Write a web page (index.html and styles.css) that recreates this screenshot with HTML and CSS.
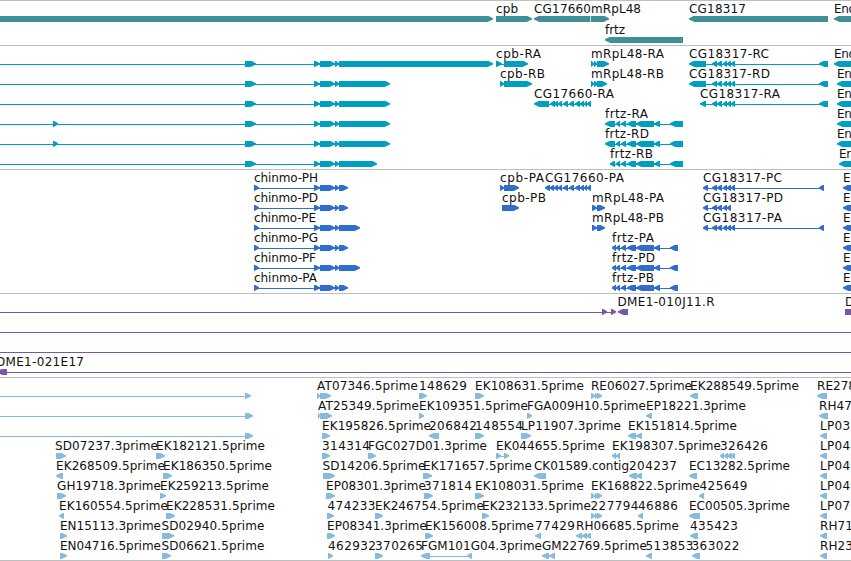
FILE: index.html
```html
<!DOCTYPE html>
<html lang="en">
<head>
    <meta charset="UTF-8">
    <title>Region view</title>
    <link rel="stylesheet" href="styles.css">
</head>
<body>
    <main class="tracks">
        <section class="track genes" data-track="genes"></section>
        <section class="track transcripts" data-track="transcripts"></section>
        <section class="track proteins" data-track="proteins"></section>
        <section class="track clones" data-track="clones"></section>
        <section class="track ests" data-track="ests"></section>
    </main>

    <script src="tracks.js"></script>
</body>
</html>
```
FILE: styles.css
```css
* {
    margin: 0;
    padding: 0;
    box-sizing: border-box;
}

body {
    background: #fff;
    overflow: hidden;
}

.tracks {
    display: flex;
    flex-direction: column;
    width: 851px;
    border-top: 1px solid #bebebe;
}

.track {
    border-bottom: 1px solid #bebebe;
}

.track svg {
    display: block;
    width: 100%;
}

.label {
    font-family: "DejaVu Sans", sans-serif;
    font-size: 12px;
    fill: #111;
}

.exon,
.intron {
    fill: currentColor;
}

.intron {
    shape-rendering: crispEdges;
}

.genes {
    color: #3f8f94;
}

.transcripts {
    color: #009fc0;
}

.proteins {
    color: #306ecd;
}

.clones {
    color: #7558a8;
}

.ests {
    color: #87bbdd;
}
```
FILE: tracks.js
```js
// feature: [label, label x, strand, exon start, exon end, exon start, exon end, ...]
const chinmo = [314, 320, 320, 335, 335, 339, 339];
const cg17660 = [554, 558, 558, 562, 563, 568, 569, 574, 575, 580, 580, 584, 584, 587, 587, 591];
const cg18317 = [712, 717, 717, 722, 723, 727, 727, 731];
const frtz = [616, 620, 621, 626, 627, 636, 636, 654, 654, 660];
const mrpl = [591, 595, 595, 598, 597, 602];

const tracks = {
    genes: {
        height: 44, first: 18, step: 21,
        rows: [
            [['', 0, 1, -5, 493], ['cpb', 496, 1, 496, 532], ['CG17660', 534, -1, 534, 590.3],
             ['mRpL48', 591, 1, 591, 609], ['CG18317', 689, -1, 689, 828], ['End', 834, -1, 834, 860]],
            [['frtz', 605, -1, 605, 683]]
        ]
    },
    transcripts: {
        height: 123, first: 18, step: 20,
        rows: [
            [['', 0, 1, -9, -5, 245, 256, ...chinmo, 493], ['cpb-RA', 496, 1, 496, 502, 504, 528],
             ['mRpL48-RA', 591, 1, 591, 594, 594, 597, 597, 609],
             ['CG18317-RC', 689, -1, 689, 706, ...cg18317, 731, 735, 819, 828], ['End', 834, -1, 834, 860]],
            [['', 0, 1, -9, -5, 245, 256, ...chinmo, 390], ['cpb-RB', 500, 1, 500, 504, 504, 532],
             ['mRpL48-RB', 591, 1, 591, 594, 594, 598, 597, 607],
             ['CG18317-RD', 689, -1, 689, 706, ...cg18317, 731, 735, 819, 828], ['End', 837, -1, 837, 860]],
            [['', 0, 1, -9, -5, 245, 256, ...chinmo, 390], ['CG17660-RA', 534, -1, 534, 549, 550, 555, ...cg17660],
             ['CG18317-RA', 700, -1, 700, 706, ...cg18317, 731, 735, 819, 828], ['End', 837, -1, 837, 860]],
            [['', 0, 1, -9, -5, 53, 58, 245, 256, ...chinmo, 390], ['frtz-RA', 605, -1, 605, 615, ...frtz, 670, 683],
             ['End', 837, -1, 837, 860]],
            [['', 0, 1, -9, -5, 53, 58, 245, 256, ...chinmo, 390], ['frtz-RD', 605, -1, 605, 615, ...frtz, 670, 683],
             ['End', 837, -1, 837, 860]],
            [['', 0, 1, -9, -5, 245, 256, ...chinmo, 377], ['frtz-RB', 610, -1, 610, 615, ...frtz, 670, 683],
             ['End', 839, -1, 839, 860]]
        ]
    },
    proteins: {
        height: 123, first: 18, step: 20,
        rows: [
            [['chinmo-PH', 254, 1, 254, 259, ...chinmo, 348], ['cpb-PA', 500, 1, 500, 504, 504, 519],
             ['CG17660-PA', 545, -1, 545, 550, 550, 554, ...cg17660],
             ['CG18317-PC', 703, -1, 703, 708, ...cg18317, 731, 735, 819, 824], ['E', 843, -1, 843, 860]],
            [['chinmo-PD', 254, 1, 254, 259, ...chinmo, 348], ['cpb-PB', 502, 1, 502, 519],
             ['mRpL48-PA', 592, 1, 592, 597, 597, 605],
             ['CG18317-PD', 703, -1, 703, 708, ...cg18317], ['E', 843, -1, 843, 860]],
            [['chinmo-PE', 254, 1, 254, 259, ...chinmo, 360], ['mRpL48-PB', 592, 1, 592, 597, 597, 605],
             ['CG18317-PA', 703, -1, 703, 708, ...cg18317, 731, 735, 819, 824], ['E', 843, -1, 843, 860]],
            [['chinmo-PG', 254, 1, 254, 259, ...chinmo, 348], ['frtz-PA', 612, -1, 612, 616, ...frtz, 670, 678],
             ['E', 843, -1, 843, 860]],
            [['chinmo-PF', 254, 1, 254, 259, ...chinmo, 360], ['frtz-PD', 612, -1, 612, 616, ...frtz, 670, 678],
             ['E', 843, -1, 843, 860]],
            [['chinmo-PA', 254, 1, 254, 259, ...chinmo, 348], ['frtz-PB', 612, -1, 612, 616, ...frtz, 670, 678],
             ['E', 843, -1, 843, 860]]
        ]
    },
    clones: {
        height: 83, first: 18, step: 20,
        rows: [
            [['', 0, 1, -9, -5, 602, 607, 611, 616], ['DME1-010J11.R', 617.5, -1, 618, 628], ['D', 845, 1, 845, 860]],
            [['', 0, 1, -9, -5, 860, 870]],
            [['', 0, 1, -9, -5, 860, 870]],
            [['DME1-021E17', -4, -1, -3, 7, 860, 870]]
        ]
    },
    ests: {
        height: 182, first: 18, step: 20,
        rows: [
            [['', 0, 1, -9, -5, 245, 251], ['AT07346.5prime', 317, 1, 317, 320, 320, 331], ['148629', 419, 1, 419, 427],
             ['EK108631.5prime', 475, 1, 475, 484], ['RE06027.5prime', 591, 1, ...mrpl],
             ['EK288549.5prime', 690, -1, 690, 698], ['RE278', 817, -1, 817, 827]],
            [['', 0, 1, -9, -5, 245, 253], ['AT25349.5prime', 318, 1, 318, 320, 320, 332],
             ['EK109351.5prime', 419, 1, 419, 424], ['FGA009H10.5prime', 527, 1, 527, 532],
             ['EP18221.3prime', 646, -1, 646, 652], ['RH47', 819, -1, 819, 828]],
            [['', 0, 1, -9, -5, 245, 253], ['EK195826.5prime', 322, 1, 322, 330], ['206842', 429, -1, 429, 439],
             ['148554', 475, 1, 475, 484], ['LP11907.3prime', 521, 1, 521, 531],
             ['EK151814.5prime', 628, -1, 628, 636, 636, 642], ['LP037', 820, -1, 820, 827]],
            [['SD07237.3prime', 55, 1, 56, 66], ['EK182121.5prime', 156, 1, 156, 165], ['314314', 322, 1, 322, 330],
             ['FGC027D01.3prime', 368, 1, 368, 376], ['EK044655.5prime', 496, 1, 496, 501, 504, 509],
             ['EK198307.5prime', 612, -1, 612, 616, 616, 620],
             ['326426', 720, -1, 720, 724, 724, 728, 727, 732, 731, 735], ['LP048', 820, -1, 820, 827]],
            [['EK268509.5prime', 56, -1, 56, 63], ['EK186350.5prime', 163, 1, 163, 172],
             ['SD14206.5prime', 322.5, 1, 323, 335], ['EK171657.5prime', 423, 1, 423, 432],
             ['CK01589.contig', 534, -1, 534, 546], ['204237', 629, -1, 629, 637, 636, 642],
             ['EC13282.5prime', 689, -1, 689, 697], ['LP049', 820, -1, 820, 827]],
            [['GH19718.3prime', 57, 1, 57, 66], ['EK259213.5prime', 160, 1, 160, 166],
             ['EP08301.3prime', 326, 1, 326, 335], ['371814', 424, 1, 424, 433], ['EK108031.5prime', 475, 1, 475, 484],
             ['EK168822.5prime', 591, 1, ...mrpl], ['425649', 699.5, -1, 699, 704], ['LP049', 820, -1, 820, 827]],
            [['EK160554.5prime', 59, -1, 59, 64], ['EK228531.5prime', 166, 1, 166, 175], ['474233', 327.5, 1, 327, 334],
             ['EK246754.5prime', 375, 1, 375, 383], ['EK232133.5prime', 482, 1, 482, 489],
             ['227794', 590.5, 1, ...mrpl], ['46886', 638, -1, 638, 643],
             ['EC00505.3prime', 689, -1, 689, 700], ['LP077', 820, -1, 820, 827]],
            [['EN15113.3prime', 60, 1, 60, 67], ['SD02940.5prime', 161.5, 1, 162, 174],
             ['EP08341.3prime', 327, 1, 327, 335], ['EK156008.5prime', 425, 1, 425, 433], ['77429', 535, -1, 535, 541],
             ['RH06685.5prime', 576, -1, 576, 582, 582, 587, 586, 591], ['435423', 690, -1, 690, 698],
             ['RH71', 820, -1, 820, 827]],
            [['EN04716.5prime', 60, 1, 60, 67], ['SD06621.5prime', 161.5, 1, 162, 171], ['462932', 328, 1, 328, 333],
             ['370265', 375, 1, 375, 383], ['FGM101G04.3prime', 421, -1, 421, 430, 467, 472],
             ['GM22769.5prime', 542, -1, 542, 549, 549, 555], ['513853', 645.5, -1, 646, 652],
             ['363022', 691.5, -1, 692, 700], ['RH23', 820, -1, 820, 827]]
        ]
    }
};

// pixel advances of the label font, everything else is 8
const advance = {
    '.': 4, '-': 7, E: 7, F: 7, P: 7, L: 7, T: 7, G: 9, D: 9, H: 9, M: 10, N: 8, J: 4,
    c: 6, h: 7, i: 3, n: 7, m: 11, o: 7, r: 5, e: 7, f: 4, t: 5, z: 6, g: 7
};

const NS = 'http://www.w3.org/2000/svg';

function add(parent, name, attrs) {
    const el = document.createElementNS(NS, name);
    for (const key in attrs) el.setAttribute(key, attrs[key]);
    parent.appendChild(el);
    return el;
}

function exonPoints(x1, x2, y, strand) {
    const head = Math.min(x2 - x1, 6);
    const tip = strand > 0 ? x2 : x1;
    const tail = strand > 0 ? x1 : x2;
    const shoulder = tip - strand * head * 0.75;
    const hip = tip - strand * head * 0.9;
    return `${tail},${y - 3} ${shoulder},${y - 3} ${tip},${y - 0.8} ${tip},${y + 0.6} ${hip},${y + 3} ${tail},${y + 3}`;
}

function drawFeature(svg, [text, labelX, strand, ...exons], y) {
    const start = exons[0];
    const end = exons[exons.length - 1];

    if (exons.length > 2) {
        add(svg, 'rect', { class: 'intron', x: start + 1, y: y, width: end - start - 2, height: 1 });
    }
    for (let i = 0; i < exons.length; i += 2) {
        add(svg, 'polygon', { class: 'exon', points: exonPoints(exons[i], exons[i + 1], y, strand) });
    }
    if (text) {
        const width = [...text].reduce((sum, ch) => sum + (advance[ch] || 8), 0);
        add(svg, 'text', { class: 'label', x: labelX, y: y - 6, textLength: width }).textContent = text;
    }
}

document.querySelectorAll('.track').forEach(section => {
    const track = tracks[section.dataset.track];
    const svg = add(section, 'svg', { height: track.height, viewBox: `0 0 851 ${track.height}` });
    track.rows.forEach((row, i) => {
        row.forEach(feature => drawFeature(svg, feature, track.first + i * track.step));
    });
});
```
